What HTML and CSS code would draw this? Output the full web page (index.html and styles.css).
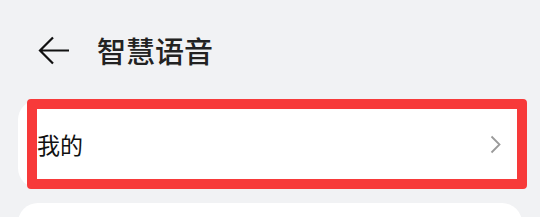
FILE: index.html
```html
<!DOCTYPE html>
<html lang="zh">
<head>
<meta charset="utf-8">
<link rel="stylesheet" href="styles.css">
</head>
<body>
<div class="page">
  <header class="header">
    <svg class="back" width="32" height="30" viewBox="0 0 32 30">
      <path d="M15 1.5 L2 14.5 L15 27.5 M2 14.5 H31" fill="none" stroke="#111" stroke-width="2.2" stroke-linecap="butt" stroke-linejoin="miter"/>
    </svg>
    <h1 class="title">智慧语音</h1>
  </header>
  <div class="list">
    <div class="card">
      <span class="label">我的</span>
      <svg class="chev" width="11" height="19" viewBox="0 0 11 19">
        <path d="M1.5 1.5 L9.5 9.5 L1.5 17.5" fill="none" stroke="#9a9a9a" stroke-width="1.8"/>
      </svg>
    </div>
    <div class="card"></div>
  </div>
  <div class="highlight"></div>
</div>
</body>
</html>
```
FILE: styles.css
```css
html, body {
  margin: 0;
  padding: 0;
  background: #f1f2f4;
  font-family: "Noto Sans CJK SC", "Noto Sans", sans-serif;
}
.page {
  position: relative;
  width: 540px;
  height: 217px;
  overflow: hidden;
}
.header {
  height: 100px;
  display: flex;
  align-items: center;
  padding-left: 38px;
  box-sizing: border-box;
}
.back {
  display: block;
  margin-right: 27px;
  margin-top: 1px;
}
.title {
  margin: 0;
  font-size: 29px;
  font-weight: 500;
  color: #222;
  line-height: 1;
}
.list {
  display: flex;
  flex-direction: column;
  gap: 15px;
  padding: 0 18px;
}
.card {
  height: 88px;
  background: #fff;
  border-radius: 20px;
  display: flex;
  align-items: center;
  justify-content: space-between;
  padding: 0 21px 0 19px;
}
.label {
  font-size: 23px;
  color: #111;
  line-height: 1;
}
.chev {
  display: block;
}
.highlight {
  position: absolute;
  left: 27px;
  top: 99px;
  width: 500px;
  height: 90px;
  box-sizing: border-box;
  border: 10px solid #f73a3a;
  border-radius: 4px;
}
```
